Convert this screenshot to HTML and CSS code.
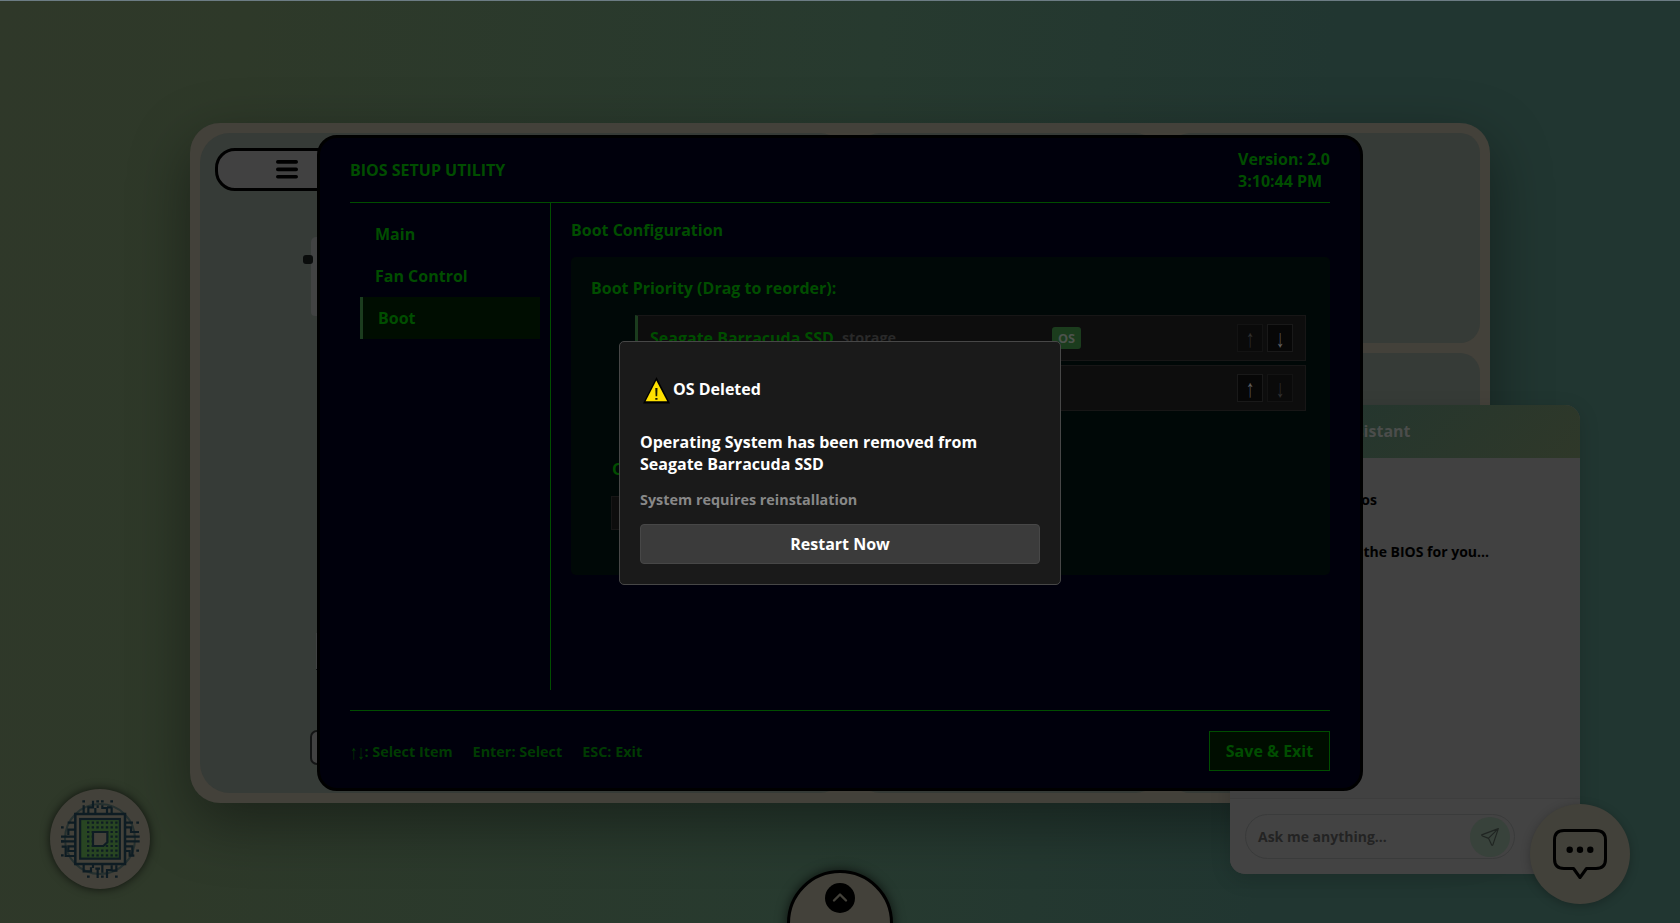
FILE: index.html
```html
<!DOCTYPE html>
<html lang="en">
<head>
<meta charset="utf-8">
<title>BIOS Setup Utility</title>
<link rel="stylesheet" href="styles.css">
</head>
<body>
<main class="desktop">
  <section class="board">
    <div class="panel panel-build">
      <div class="menu-pill">
        <svg class="menu-icon" viewBox="0 0 22 19"><path d="M1.8 1.9h18.4M1.8 9.4h18.4M1.8 16.7h18.4"/></svg>
      </div>
      <div class="pc-case"></div>
      <div class="pc-knob"></div>
      <div class="pc-edge"></div>
      <div class="pc-label"></div>
    </div>
    <div class="panel panel-mid"></div>
    <div class="panel-stack">
      <div class="panel panel-top"></div>
      <div class="panel panel-bottom"></div>
    </div>
  </section>

  <aside class="chat">
    <header class="chat-head">AI Assistant</header>
    <div class="chat-log">
      <p class="chat-user">open bios</p>
      <p class="chat-bot">Opening the BIOS for you...</p>
    </div>
    <div class="chat-foot">
      <div class="chat-input">
        <span>Ask me anything...</span>
        <span class="chat-send"><svg viewBox="0 0 24 24"><path d="M22 2 2 9.4Q2 10.4 3 10.8L9.6 13.4Q10.4 13.8 10.8 14.6L14 21.6Q14.6 22.4 15.4 21.4L22 2ZM22 2 10 13.6"/></svg></span>
      </div>
    </div>
  </aside>

  <div class="chip-button">
    <svg viewBox="60 57 300 300">
      <circle class="ring" cx="210" cy="207" r="105"/>
      <path class="pin" d="M161 106v24M175 130v-18h14v-20M196 130v-16M203 106v8M217 106v8h14v16M245 112h-14M245 112v18"/>
      <path class="pin" d="M161 284v20h22v-12M189 284v10M203 296v28M196 296h14M217 284v24M231 324v-24h14v-14M259 286v16h-14"/>
      <path class="pin" d="M135 158h-22M135 179h-20v16M135 200h-42M93 214h42M135 229h-20v14h20M135 258h-28v-28h-12"/>
      <path class="pin" d="M287 158h22M287 172h16v14h24M287 200h42M329 214h-42M287 229h20v28M287 243h12v14h14"/>
      <path class="dots" d="M157 94h8M241 94h8M199 94h8M213 94h8M93 172h8M319 158h8M93 256h8M319 242h8M171 320h8M255 320h8M93 214h8M213 320h8"/>
      <rect class="frame" x="136" y="132" width="149" height="150"/>
      <rect class="die" x="150.500" y="147" width="119" height="119"/>
      <path class="grid" d="M171 158h96M171 172h96M171 186h96M171 200h96M171 214h96M171 228h96M171 242h96M171 256h96"/>
      <path class="core" d="M189 186h43v31l-12 11h-31z"/>
    </svg>
  </div>

  <div class="drawer-tab">
    <span class="drawer-arrow"><svg viewBox="0 0 30 30"><path d="m9 17.500 6-6 6 6"/></svg></span>
  </div>

  <section class="bios">
    <header class="bios-head">
      <span>BIOS SETUP UTILITY</span>
      <div>Version: 2.0<br>3:10:44 PM</div>
    </header>
    <div class="bios-body">
      <nav class="bios-nav">
        <a>Main</a>
        <a>Fan Control</a>
        <a class="active">Boot</a>
      </nav>
      <div class="bios-content">
        <h2>Boot Configuration</h2>
        <div class="boot-panel">
          <h3>Boot Priority (Drag to reorder):</h3>
          <ol class="boot-list">
            <li class="first">
              <span class="name">Seagate Barracuda SSD</span><span class="kind">storage</span>
              <span class="badge">OS</span>
              <span class="moves"><b class="off"><i>↑</i></b><b><i>↓</i></b></span>
            </li>
            <li>
              <span class="moves"><b><i>↑</i></b><b class="off"><i>↓</i></b></span>
            </li>
          </ol>
          <div class="os-tools">
            <h4>OS</h4>
            <div class="os-row"></div>
          </div>
        </div>
      </div>
    </div>
    <footer class="bios-foot">
      <div class="keys"><span><i>↑↓</i>: Select Item</span><span>Enter: Select</span><span>ESC: Exit</span></div>
      <div class="save">Save &amp; Exit</div>
    </footer>
  </section>

  <div class="chat-fab">
    <svg viewBox="0 0 54 50"><path d="M11 1.500h32q9.500 0 9.500 9.500v19q0 9.500-9.500 9.500h-9.500L27 48.500 20.500 39.500H11Q1.500 39.500 1.500 30V11Q1.500 1.500 11 1.500z"/><circle cx="16.700" cy="20.800" r="3.200"/><circle cx="27" cy="20.800" r="3.200"/><circle cx="37.300" cy="20.800" r="3.200"/></svg>
  </div>

  <section class="dialog">
    <h1>
      <svg viewBox="0 0 27 27"><path class="tri-edge" d="M13.500 0 27 26.500H0z"/><path class="tri" d="M13.300 3.500 24.200 24.300H2.600z"/><path class="bang" d="M12.300 11h2.200l-.3 8.200h-1.600zM12.300 21h2.200v1.700h-2.200z"/></svg>
      <span>OS Deleted</span>
    </h1>
    <p>Operating System has been removed from Seagate Barracuda SSD</p>
    <p class="hint">System requires reinstallation</p>
    <div class="restart">Restart Now</div>
  </section>
</main>
</body>
</html>
```
FILE: styles.css
```css
* { box-sizing: border-box; }

body {
  margin: 0;
  font-family: "Open Sans", "Noto Sans", sans-serif;
  font-size: 16px;
  font-weight: 700;
  line-height: 22px;
}

h1, h2, h3, h4, p, ol { margin: 0; padding: 0; font-size: 16px; }

.desktop {
  position: relative;
  width: 1680px;
  height: 923px;
  overflow: hidden;
  border-top: 1px solid #6c7c84;
  background: linear-gradient(95deg, #2f3829 0%, #2e3929 14%, #273a2f 50%, #213631 76%, #213631 100%);
}

/* Workspace behind the BIOS window */
.board {
  position: absolute;
  left: 190px;
  top: 122px;
  width: 1300px;
  height: 680px;
  padding: 10px;
  border-radius: 30px;
  background: #43413a;
  box-shadow: 0 20px 60px rgba(0, 0, 0, .4);
  display: grid;
  grid-template-columns: 645px 305px 310px;
  gap: 10px;
}
.panel { background: #363b37; border-radius: 20px; position: relative; }
.panel-build { border-radius: 30px 25px 25px 30px; }
.panel-mid { border-radius: 25px; }
.panel-stack { display: grid; grid-template-rows: 210px 1fr; gap: 10px; }

.menu-pill {
  margin: 15px;
  width: 200px;
  height: 43px;
  border: 3px solid #000;
  border-radius: 20px;
  background: #414141;
  padding: 9px 58px;
}
.menu-icon { display: block; width: 22px; height: 19px; }
.menu-icon path { stroke: #000; stroke-width: 3.600; stroke-linecap: round; }
.pc-case { position: absolute; left: 111px; top: 104px; width: 10px; height: 79px; background: #424343; border-radius: 5px 0 0 4px; }
.pc-knob { position: absolute; left: 103px; top: 122px; width: 10px; height: 9px; background: #0a0c0b; border-radius: 3px; }
.pc-edge { position: absolute; left: 116px; top: 500px; width: 2px; height: 37px; background: #414343; border-bottom: 1px solid #151717; }
.pc-label { position: absolute; left: 110px; top: 597px; width: 80px; height: 35px; background: #414141; border: 2px solid #131414; border-radius: 7px; }

/* Chat assistant */
.chat {
  position: absolute;
  left: 1230px;
  top: 404px;
  width: 350px;
  height: 469px;
  border-radius: 15px;
  overflow: hidden;
  background: #424242;
  box-shadow: 0 5px 20px rgba(0, 0, 0, .15);
  display: flex;
  flex-direction: column;
}
.chat-head {
  height: 53px;
  padding: 15px 169.500px 0 0;
  text-align: right;
  color: #4b4d4b;
  background: linear-gradient(135deg, #203530, #2f3829);
}
.chat-log { flex: 1; background: #414141; font-size: 14px; }
.chat-user { font-size: 14px; padding: 31px 203px 0 0; text-align: right; color: #000; }
.chat-bot { font-size: 14px; padding: 30px 91px 0 0; text-align: right; color: #000; white-space: nowrap; }
.chat-foot { height: 76px; padding: 15px; border-top: 1px solid #3d3d3d; background: #434343; }
.chat-input {
  width: 270px;
  height: 45px;
  padding: 0 4px 0 12px;
  border: 1px solid #3a3b3b;
  border-radius: 23px;
  display: flex;
  align-items: center;
  justify-content: space-between;
  font-size: 14px;
  color: #232323;
}
.chat-send { width: 40px; height: 40px; border-radius: 50%; background: #38423b; padding: 10px; }
.chat-send svg { display: block; width: 20px; height: 20px; fill: none; stroke: #202522; stroke-width: 1.400; stroke-linejoin: round; }

/* Round launchers */
.chip-button {
  position: absolute;
  left: 50px;
  top: 788px;
  width: 100px;
  height: 100px;
  border-radius: 50%;
  background: #43413a;
  box-shadow: 0 0 10px rgba(0, 0, 0, .7);
}
.chip-button svg { display: block; fill: none; stroke: #0e1c23; stroke-width: 6.500; }
.chip-button .ring { stroke: #25302f; stroke-width: 6; }
.chip-button .dots { stroke-width: 7; }
.chip-button .frame { fill: #43413a; stroke-width: 7.500; }
.chip-button .die { fill: #284522; stroke-width: 6.500; }
.chip-button .grid { stroke-width: 6.500; stroke-dasharray: 7 7.100; }
.chip-button .core { fill: #43413a; }

.drawer-tab {
  position: absolute;
  left: 787px;
  top: 869px;
  width: 106px;
  height: 106px;
  padding-top: 10px;
  border: 3px solid #000;
  border-radius: 50%;
  background: #43413a;
  box-shadow: 0 0 12px rgba(0, 0, 0, .7);
}
.drawer-arrow { display: block; width: 30px; height: 30px; margin: 0 auto; border-radius: 50%; background: #000; }
.drawer-arrow svg { display: block; fill: none; stroke: #43413a; stroke-width: 2.400; stroke-linecap: round; stroke-linejoin: round; }

.chat-fab {
  position: absolute;
  left: 1530px;
  top: 803px;
  width: 100px;
  height: 100px;
  padding: 25px 23px;
  border-radius: 50%;
  background: #42413a;
  box-shadow: 0 2px 10px rgba(0, 0, 0, .25);
}
.chat-fab svg { display: block; width: 54px; height: 50px; }
.chat-fab path { fill: none; stroke: #000; stroke-width: 3; stroke-linejoin: round; }

/* BIOS window */
.bios {
  position: absolute;
  left: 317px;
  top: 134px;
  width: 1046px;
  height: 656px;
  padding: 0 30px;
  border: 3px solid #000;
  border-radius: 20px;
  background: #00000c;
  color: #004d00;
  display: flex;
  flex-direction: column;
}
.bios-head { height: 65px; padding: 10px 0; border-bottom: 1px solid #004d00; display: flex; align-items: center; justify-content: space-between; }
.bios-body { height: 487px; display: flex; }
.bios-nav { width: 201px; padding: 10px; border-right: 1px solid #004d00; }
.bios-nav a { display: block; height: 42px; padding: 10px 15px; }
.bios-nav .active { border-left: 3px solid #1b3c1e; background: #000d01; }
.bios-content { flex: 1; padding: 16px 0 0 20px; }
.boot-panel { height: 318px; margin-top: 16px; padding: 20px 24px 0 20px; border-radius: 5px; background: #000807; }
.boot-list { list-style: none; margin: 16px 0 0 44px; display: grid; gap: 4px; }
.boot-list li { height: 46px; padding: 0 12px 0 12px; border: 1px solid #171616; background: #0d0d0d; display: flex; align-items: center; }
.boot-list .first { border-left: 3px solid #1b3c1e; }
.kind { margin-left: 8px; font-size: 14.4px; color: #292929; }
.badge { position: absolute; left: 732px; top: 189px; width: 29px; height: 22px; text-align: center; border-radius: 3px; background: #1b3c1d; color: #4d534d; font-size: 12.8px; }
.moves { margin-left: auto; display: flex; gap: 4px; color: #5e5e5e; }
.moves b { width: 26px; height: 28px; padding-top: 3px; border: 1px solid #191919; background: #070707; text-align: center; font: 400 17px/22px "Liberation Serif", serif; }
.moves .off { border-color: #131313; background: #0a0a0a; color: #303030; }
.moves i, .keys i { display: inline-block; font-style: normal; }
.moves i { transform: translateY(1px) scaleY(1.45); }
.os-tools { padding: 47px 0 0 20px; }
.os-tools h4 { padding-left: 1px; }
.os-row { width: 300px; height: 34px; margin-top: 16px; border: 1px solid #171616; background: #0d0d0d; }
.bios-foot { margin-top: 20px; padding-top: 20px; border-top: 1px solid #004d00; display: flex; justify-content: space-between; align-items: center; }
.keys { display: flex; gap: 20px; padding-top: 1px; font-size: 14.4px; color: #003b02; }
.keys i { font: 400 14.4px/20px "Liberation Serif", serif; transform: scaleY(1.4); }
.save { width: 121px; height: 40px; border: 1px solid #004d00; background: #000d00; line-height: 38px; text-align: center; }

/* Alert */
.dialog {
  position: absolute;
  left: 619px;
  top: 340px;
  width: 442px;
  height: 244px;
  padding: 34px 20px 20px;
  border: 1px solid #474747;
  border-radius: 5px;
  background: #1a1a1a;
  color: #fff;
}
.dialog h1 { display: flex; gap: 3px; padding-left: 3px; height: 55px; }
.dialog h1 svg { width: 27px; height: 27px; margin-top: 1px; }
.dialog h1 span { padding-top: 2px; }
.dialog .tri-edge { fill: #000; }
.dialog .tri { fill: #ffe100; }
.dialog .bang { fill: #1a1a00; }
.dialog .hint { margin-top: 14px; font-size: 14.4px; color: #888; }
.restart { height: 40px; margin-top: 13px; border: 1px solid #474747; border-radius: 4px; background: #3b3b3b; line-height: 38px; text-align: center; }
```
